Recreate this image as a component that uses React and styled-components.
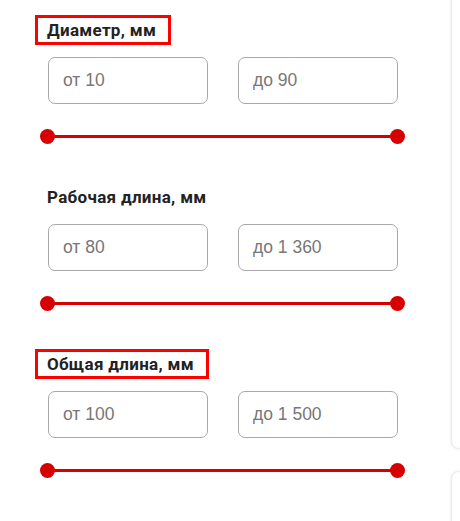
import React from 'react'
import styled, { createGlobalStyle } from 'styled-components'

const GlobalStyle = createGlobalStyle`
body{
    margin:0;
    background:#fff;
    font-family:Roboto, "Liberation Sans", sans-serif;
    overflow:hidden;
}
`

const filters = [
    { title: 'Диаметр, мм', from: 'от 10', to: 'до 90', marked: true },
    { title: 'Рабочая длина, мм', from: 'от 80', to: 'до 1 360', marked: false },
    { title: 'Общая длина, мм', from: 'от 100', to: 'до 1 500', marked: true },
]

export default function App() {
    return (
        <>
            <GlobalStyle />
            <Page>
                <Filters>
                    {filters.map((filter, index) => {
                        return (
                            <Section key={index}>
                                <Title $marked={filter.marked}>{filter.title}</Title>
                                <Inputs>
                                    <Field type="text" placeholder={filter.from} />
                                    <Field type="text" placeholder={filter.to} />
                                </Inputs>
                                <Range>
                                    <Thumb />
                                    <Track />
                                    <Thumb />
                                </Range>
                            </Section>
                        )
                    })}
                </Filters>
                <Side>
                    <SideCard $height={467} $top={-20} />
                    <SideCard $height={200} />
                </Side>
            </Page>
        </>
    )
}

const Page = styled.div`
display:flex;
width:460px;
height:521px;
overflow:hidden;
`

const Filters = styled.div`
flex:0 0 451px;
box-sizing:border-box;
padding:18px 0 0 48px;
`

const Section = styled.div`
display:flex;
flex-direction:column;
align-items:flex-start;
margin-bottom:41px;
`

const Title = styled.div`
display:inline-block;
margin-left:-10px;
padding:0 12px 0 9px;
height:24px;
line-height:24px;
font-size:17px;
letter-spacing:0.3px;
font-weight:700;
color:#222;
outline:${props => props.$marked ? '3px solid #ff0000' : 'none'};
`

const Inputs = styled.div`
display:flex;
gap:30px;
margin-top:15px;
`

const Field = styled.input`
width:160px;
height:47px;
box-sizing:border-box;
border:1px solid #a9a9a9;
border-radius:7px;
padding:0 14px;
font-family:"Liberation Sans", Arial, sans-serif;
font-size:17.5px;
color:#333;
background:#fff;
outline:none;
&::placeholder{
    color:#777;
}
`

const Range = styled.div`
display:flex;
align-items:center;
width:365px;
height:15px;
margin:25px 0 0 -8px;
`

const Thumb = styled.span`
flex:0 0 15px;
height:15px;
border-radius:50%;
background:#d60000;
`

const Track = styled.span`
flex:1;
height:3px;
margin:0 -1px;
background:#d60000;
`

const Side = styled.div`
flex:0 0 300px;
display:flex;
flex-direction:column;
gap:22px;
`

const SideCard = styled.div`
flex-shrink:0;
height:${props => props.$height}px;
margin-top:${props => props.$top || 0}px;
border:1px solid #ececec;
border-radius:8px;
background:#fff;
box-shadow:0 0 3px rgba(0,0,0,0.1);
`
